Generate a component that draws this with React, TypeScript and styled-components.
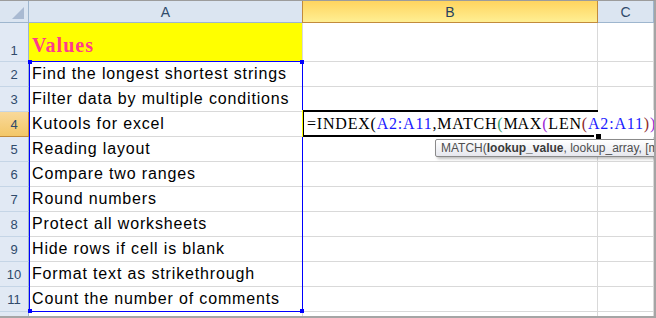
import styled, { createGlobalStyle } from 'styled-components';

const GlobalStyle = createGlobalStyle`
  html, body {
    margin: 0;
    padding: 0;
    background: #fff;
  }
`;

const rows = [
  'Find the longest shortest strings',
  'Filter data by multiple conditions',
  'Kutools for excel',
  'Reading layout',
  'Compare two ranges',
  'Round numbers',
  'Protect all worksheets',
  'Hide rows if cell is blank',
  'Format text as strikethrough',
  'Count the number of comments',
];

const Frame = styled.div`
  position: relative;
  width: 656px;
  height: 318px;
  box-sizing: border-box;
  overflow: hidden;
  border-top: 1px solid #9c9c9c;
  border-right: 2px solid #a5a5a5;
  border-bottom: 2px solid #a5a5a5;
  background: #fff;
`;

const Sheet = styled.div`
  display: grid;
  grid-template-columns: 29px 274px 295px 56px;
  grid-template-rows: 22px 39px repeat(11, 25px);
`;

const Corner = styled.div`
  box-sizing: border-box;
  background: #dbe5f1;
  border-right: 1px solid #9eb6ce;
  border-bottom: 1px solid #9eb6ce;
  display: flex;
  align-items: flex-end;
  justify-content: flex-end;
  padding: 0 4px 3px 0;
`;

const ColHeader = styled.div<{ $active?: boolean }>`
  box-sizing: border-box;
  display: flex;
  align-items: center;
  justify-content: center;
  font-family: 'Liberation Sans', Arial, sans-serif;
  font-size: 14px;
  color: ${p => (p.$active ? '#27415f' : '#2f4a6b')};
  background: ${p =>
    p.$active ? 'linear-gradient(#ffd45f, #ffef93)' : '#dbe5f1'};
  border-right: 1px solid ${p => (p.$active ? '#c28b3c' : '#9eb6ce')};
  border-bottom: 1px solid ${p => (p.$active ? '#c28b3c' : '#9eb6ce')};
  ${p => p.$active && 'border-left: 1px solid #c28b3c; margin-left: -1px;'}
`;

const RowHeader = styled.div<{ $active?: boolean; $tall?: boolean }>`
  box-sizing: border-box;
  display: flex;
  align-items: ${p => (p.$tall ? 'flex-end' : 'center')};
  justify-content: center;
  padding-bottom: ${p => (p.$tall ? '3px' : '0')};
  font-family: 'Liberation Sans', Arial, sans-serif;
  font-size: 13px;
  color: #2f4a6b;
  background: ${p =>
    p.$active ? 'linear-gradient(#f9d99a, #f3c768)' : '#e1e9f4'};
  border-right: 1px solid ${p => (p.$active ? '#c28b3c' : '#9eb6ce')};
  border-bottom: 1px solid ${p => (p.$active ? '#c28b3c' : '#c5d5e6')};
`;

const Cell = styled.div<{ $fill?: string; $tall?: boolean }>`
  box-sizing: border-box;
  display: flex;
  align-items: ${p => (p.$tall ? 'flex-end' : 'center')};
  padding: ${p => (p.$tall ? '0 0 4px 3px' : '0 0 0 3px')};
  background: ${p => p.$fill || '#fff'};
  border-right: 1px solid #d9d9d9;
  border-bottom: 1px solid #d9d9d9;
  font-family: 'Liberation Sans', Arial, sans-serif;
  font-size: 16px;
  letter-spacing: 0.85px;
  color: #000;
  white-space: nowrap;
`;

const Title = styled.span`
  font-family: 'Liberation Serif', 'Times New Roman', serif;
  font-weight: bold;
  font-size: 20px;
  letter-spacing: 1px;
  color: #ff3b8d;
`;

const RangeBox = styled.div`
  position: absolute;
  left: 29px;
  top: 60px;
  width: 274px;
  height: 251px;
  box-sizing: border-box;
  border: 1px solid #0000ff;
  pointer-events: none;
`;

const Handle = styled.span<{ $x: 'left' | 'right'; $y: 'top' | 'bottom' }>`
  position: absolute;
  width: 4px;
  height: 4px;
  background: #0000ff;
  ${p => p.$x}: -2px;
  ${p => p.$y}: -2px;
`;

const Editor = styled.div`
  position: absolute;
  left: 302px;
  top: 109px;
  width: 352px;
  height: 27px;
  box-sizing: border-box;
  background: #fff;
  border-left: 1px solid #ffff00;
  box-shadow: inset 1px 0 0 #000;
  padding-left: 4px;
  display: flex;
  align-items: center;
  font-family: 'Liberation Serif', 'Times New Roman', serif;
  font-size: 16px;
  letter-spacing: 0.8px;
  color: #000;
  white-space: nowrap;

  &::before,
  &::after {
    content: '';
    position: absolute;
    left: 0;
    width: 295px;
    height: 2px;
    background: #000;
  }
  &::before {
    top: 0;
  }
  &::after {
    bottom: 0;
    width: 291px;
  }
`;

const FillHandle = styled.span`
  position: absolute;
  left: 292px;
  bottom: -3px;
  width: 5px;
  height: 5px;
  background: #000;
  border: 1px solid #fff;
`;

const Tok = styled.span<{ $c: string }>`
  color: ${p => p.$c};
`;

const Caret = styled.span`
  display: inline-block;
  width: 1px;
  height: 23px;
  background: #000;
  vertical-align: middle;
  margin: 0 -0.5px;
`;

const Tooltip = styled.div`
  position: absolute;
  left: 435px;
  top: 138px;
  width: 240px;
  height: 18px;
  box-sizing: border-box;
  padding: 0 0 0 5px;
  display: flex;
  align-items: center;
  background: linear-gradient(#ffffff, #e6e7ee);
  border: 1px solid #8a8a8a;
  border-radius: 2px;
  box-shadow: 2px 2px 3px rgba(0, 0, 0, 0.25);
  font-family: 'Liberation Sans', Arial, sans-serif;
  font-size: 12px;
  color: #4f4f4f;
  white-space: nowrap;

  b {
    color: #3a3a3a;
  }
`;

const SelectAll = () => (
  <svg width="12" height="12" viewBox="0 0 12 12">
    <polygon points="12,0 12,12 0,12" fill="#a9bad2" />
  </svg>
);

const BLUE = '#1a1aff';

export default function App() {
  return (
    <>
      <GlobalStyle />
      <Frame>
        <Sheet>
          <Corner>
            <SelectAll />
          </Corner>
          <ColHeader>A</ColHeader>
          <ColHeader $active>B</ColHeader>
          <ColHeader>C</ColHeader>

          <RowHeader $tall>1</RowHeader>
          <Cell $tall $fill="#ffff00">
            <Title>Values</Title>
          </Cell>
          <Cell />
          <Cell />

          {rows.map((text, i) => (
            <Row key={i} n={i + 2} text={text} />
          ))}

          <RowHeader />
          <Cell />
          <Cell />
          <Cell />
        </Sheet>

        <RangeBox>
          <Handle $x="left" $y="top" />
          <Handle $x="right" $y="top" />
          <Handle $x="left" $y="bottom" />
          <Handle $x="right" $y="bottom" />
        </RangeBox>

        <Editor>
          <span>=INDEX(</span>
          <Tok $c={BLUE}>A2:A11</Tok>
          <span>,MATCH</span>
          <Tok $c="#2e9a6a">(</Tok>
          <span>M</span>
          <Caret />
          <span>AX</span>
          <Tok $c="#9b27d6">(</Tok>
          <span>LEN</span>
          <Tok $c="#8f2a2a">(</Tok>
          <Tok $c={BLUE}>A2:A11</Tok>
          <Tok $c="#8f2a2a">)</Tok>
          <Tok $c="#9b27d6">)</Tok>
          <span>,LEN(A2:A11),0))</span>
          <FillHandle />
        </Editor>

        <Tooltip>
          MATCH(<b>lookup_value</b>, lookup_array, [match_type])
        </Tooltip>
      </Frame>
    </>
  );
}

const Row = ({ n, text }: { n: number; text: string }) => (
  <>
    <RowHeader $active={n === 4}>{n}</RowHeader>
    <Cell>{text}</Cell>
    <Cell />
    <Cell />
  </>
);
